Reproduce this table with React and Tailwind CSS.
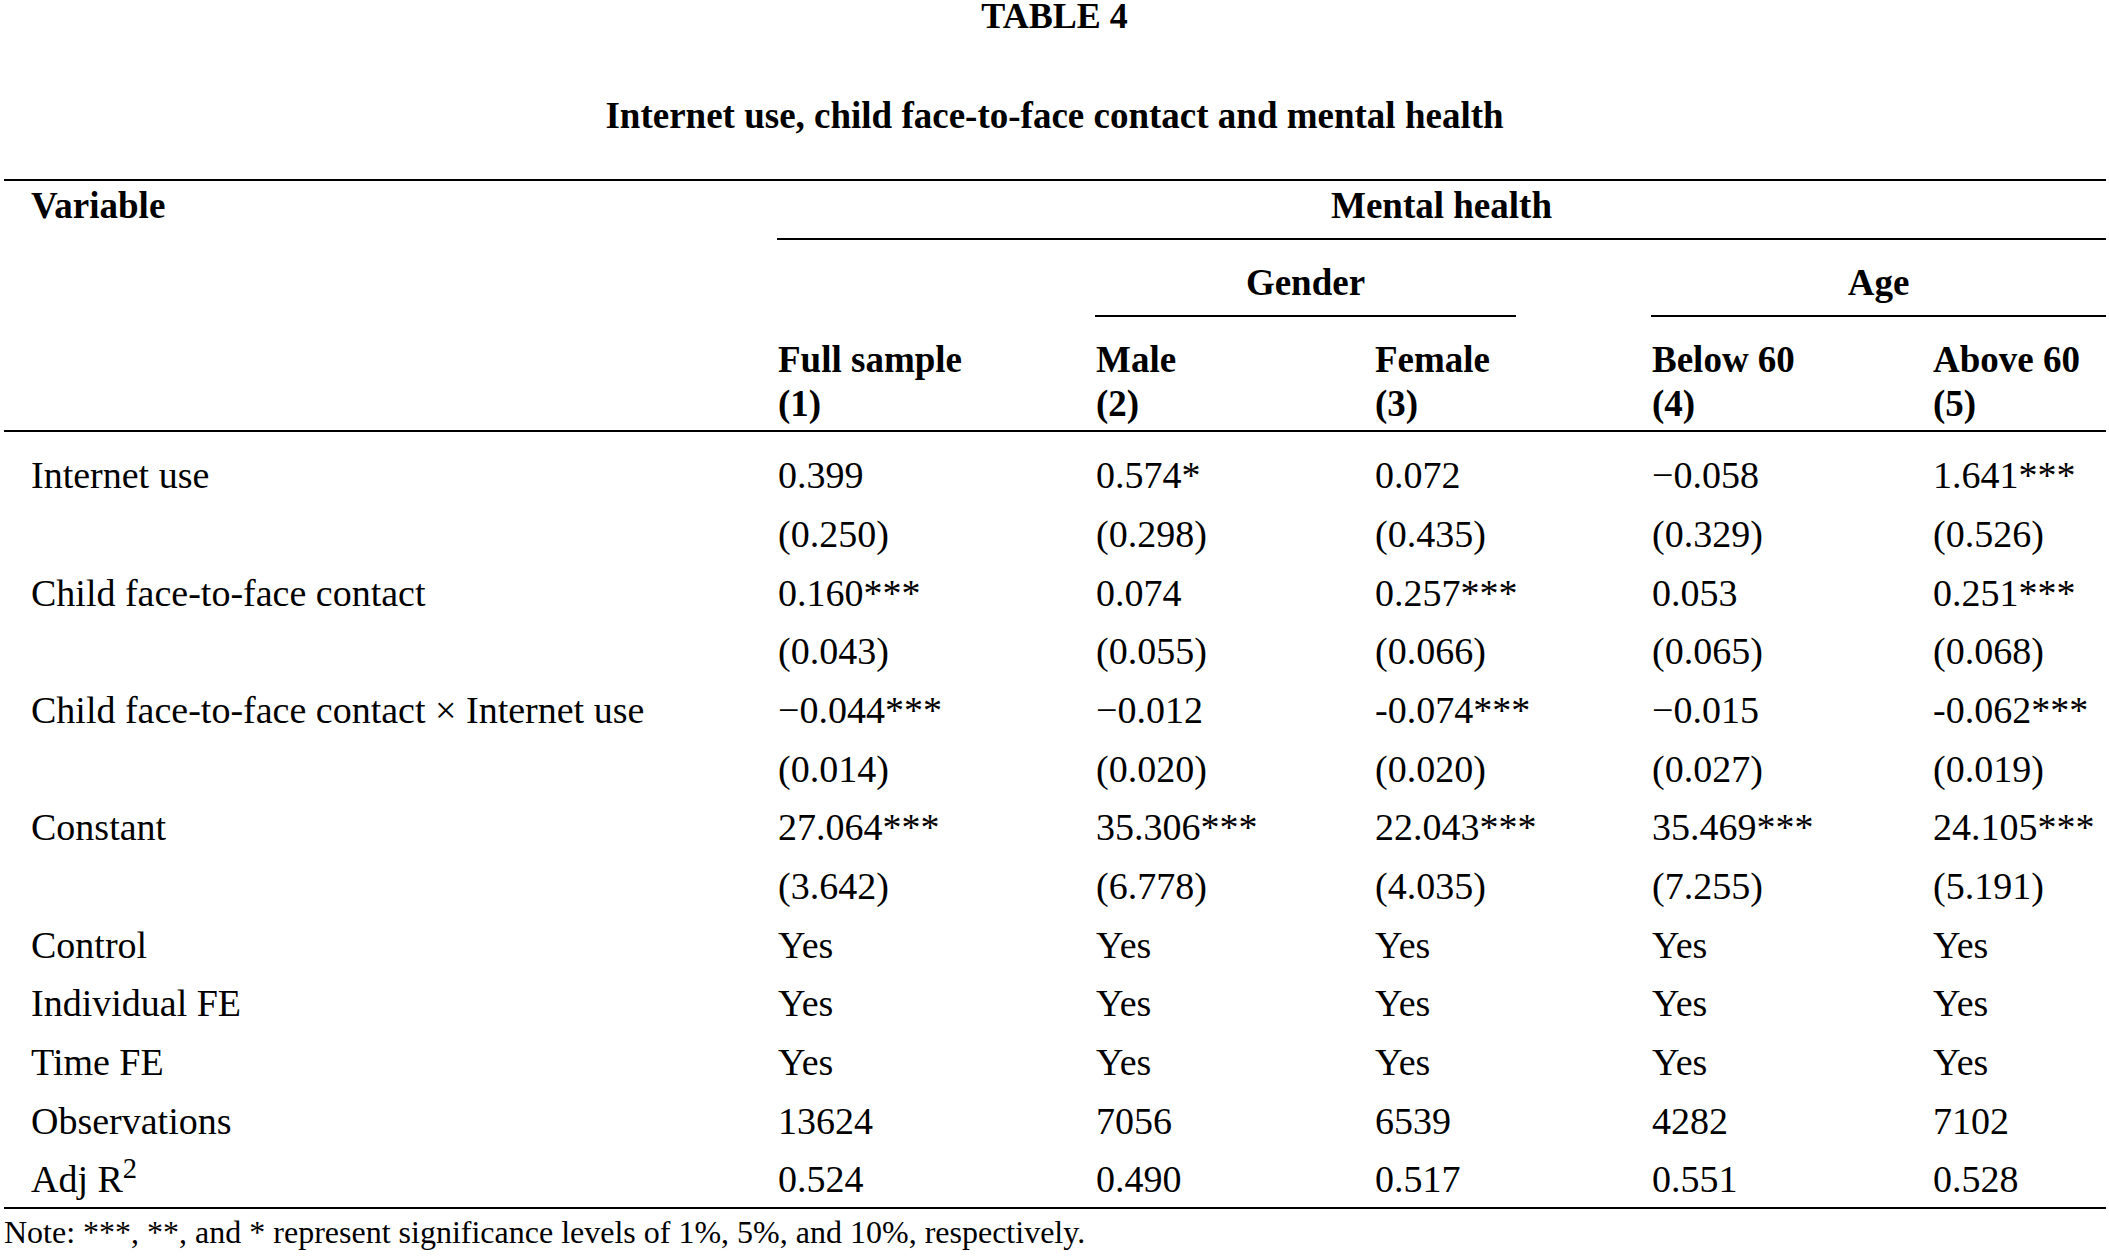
const cols = 'grid grid-cols-[773px_318px_279px_277px_281px_174px]'

const rows = [
  ['Internet use', '0.399', '0.574*', '0.072', '\u22120.058', '1.641***'],
  ['', '(0.250)', '(0.298)', '(0.435)', '(0.329)', '(0.526)'],
  ['Child face-to-face contact', '0.160***', '0.074', '0.257***', '0.053', '0.251***'],
  ['', '(0.043)', '(0.055)', '(0.066)', '(0.065)', '(0.068)'],
  ['Child face-to-face contact \u00d7 Internet use', '\u22120.044***', '\u22120.012', '-0.074***', '\u22120.015', '-0.062***'],
  ['', '(0.014)', '(0.020)', '(0.020)', '(0.027)', '(0.019)'],
  ['Constant', '27.064***', '35.306***', '22.043***', '35.469***', '24.105***'],
  ['', '(3.642)', '(6.778)', '(4.035)', '(7.255)', '(5.191)'],
  ['Control', 'Yes', 'Yes', 'Yes', 'Yes', 'Yes'],
  ['Individual FE', 'Yes', 'Yes', 'Yes', 'Yes', 'Yes'],
  ['Time FE', 'Yes', 'Yes', 'Yes', 'Yes', 'Yes'],
  ['Observations', '13624', '7056', '6539', '4282', '7102'],
  ['Adj R2', '0.524', '0.490', '0.517', '0.551', '0.528'],
]

const heads = [
  ['Full sample', '(1)'],
  ['Male', '(2)'],
  ['Female', '(3)'],
  ['Below 60', '(4)'],
  ['Above 60', '(5)'],
]

function Label({ text }) {
  if (text === 'Adj R2') {
    return (
      <>
        Adj R<sup>2</sup>
      </>
    )
  }
  return text
}

export default function App() {
  return (
    <div className="min-h-[1256px] w-[2109px] bg-white text-black font-['Liberation_Serif',serif]">
      <div className="text-center text-[36px] font-bold leading-[32px]">TABLE 4</div>
      <div className="mt-[67.5px] text-center text-[37px] font-bold leading-[32px]">
        Internet use, child face-to-face contact and mental health
      </div>

      <div className="ml-[4px] mt-[47.5px] w-[2102px]">
        {/* header */}
        <div className={`${cols} border-t-2 border-b-2 border-black text-[37px] font-bold leading-[44px]`}>
          <div className="col-start-1 row-start-1 row-span-3 pl-[27px] pt-[2.5px]">Variable</div>
          <div className="col-start-2 col-span-5 row-start-1 border-b-2 border-black pt-[2.5px] pb-[10.5px] text-center">
            Mental health
          </div>
          <div className="col-start-3 col-span-2 row-start-2 pt-[20.5px]">
            <div className="w-[421px] border-b-2 border-black pb-[10.5px] text-center">Gender</div>
          </div>
          <div className="col-start-5 col-span-2 row-start-2 pt-[20.5px]">
            <div className="border-b-2 border-black pb-[10.5px] text-center">Age</div>
          </div>
          {heads.map(([name, num], i) => (
            <div key={num} className={`${i === 0 ? 'col-start-2' : ''} row-start-3 pt-[20.5px] pb-[4.5px] pl-[1px]`}>
              <div>{name}</div>
              <div>{num}</div>
            </div>
          ))}
        </div>

        {/* body */}
        <div className="border-b-2 border-black pt-[14.3px] text-[38px] leading-[58.67px]">
          {rows.map((row, i) => (
            <div key={i} className={`${cols} ${i === rows.length - 1 ? 'h-[56.67px]' : ''}`}>
              <div className="pl-[27px]">
                <Label text={row[0]} />
              </div>
              {row.slice(1).map((cell, j) => (
                <div key={j} className="pl-[1px]">{cell}</div>
              ))}
            </div>
          ))}
        </div>

        <div className="mt-[5px] text-[32px] leading-[36px]">
          Note: ***, **, and * represent significance levels of 1%, 5%, and 10%, respectively.
        </div>
      </div>
    </div>
  )
}
